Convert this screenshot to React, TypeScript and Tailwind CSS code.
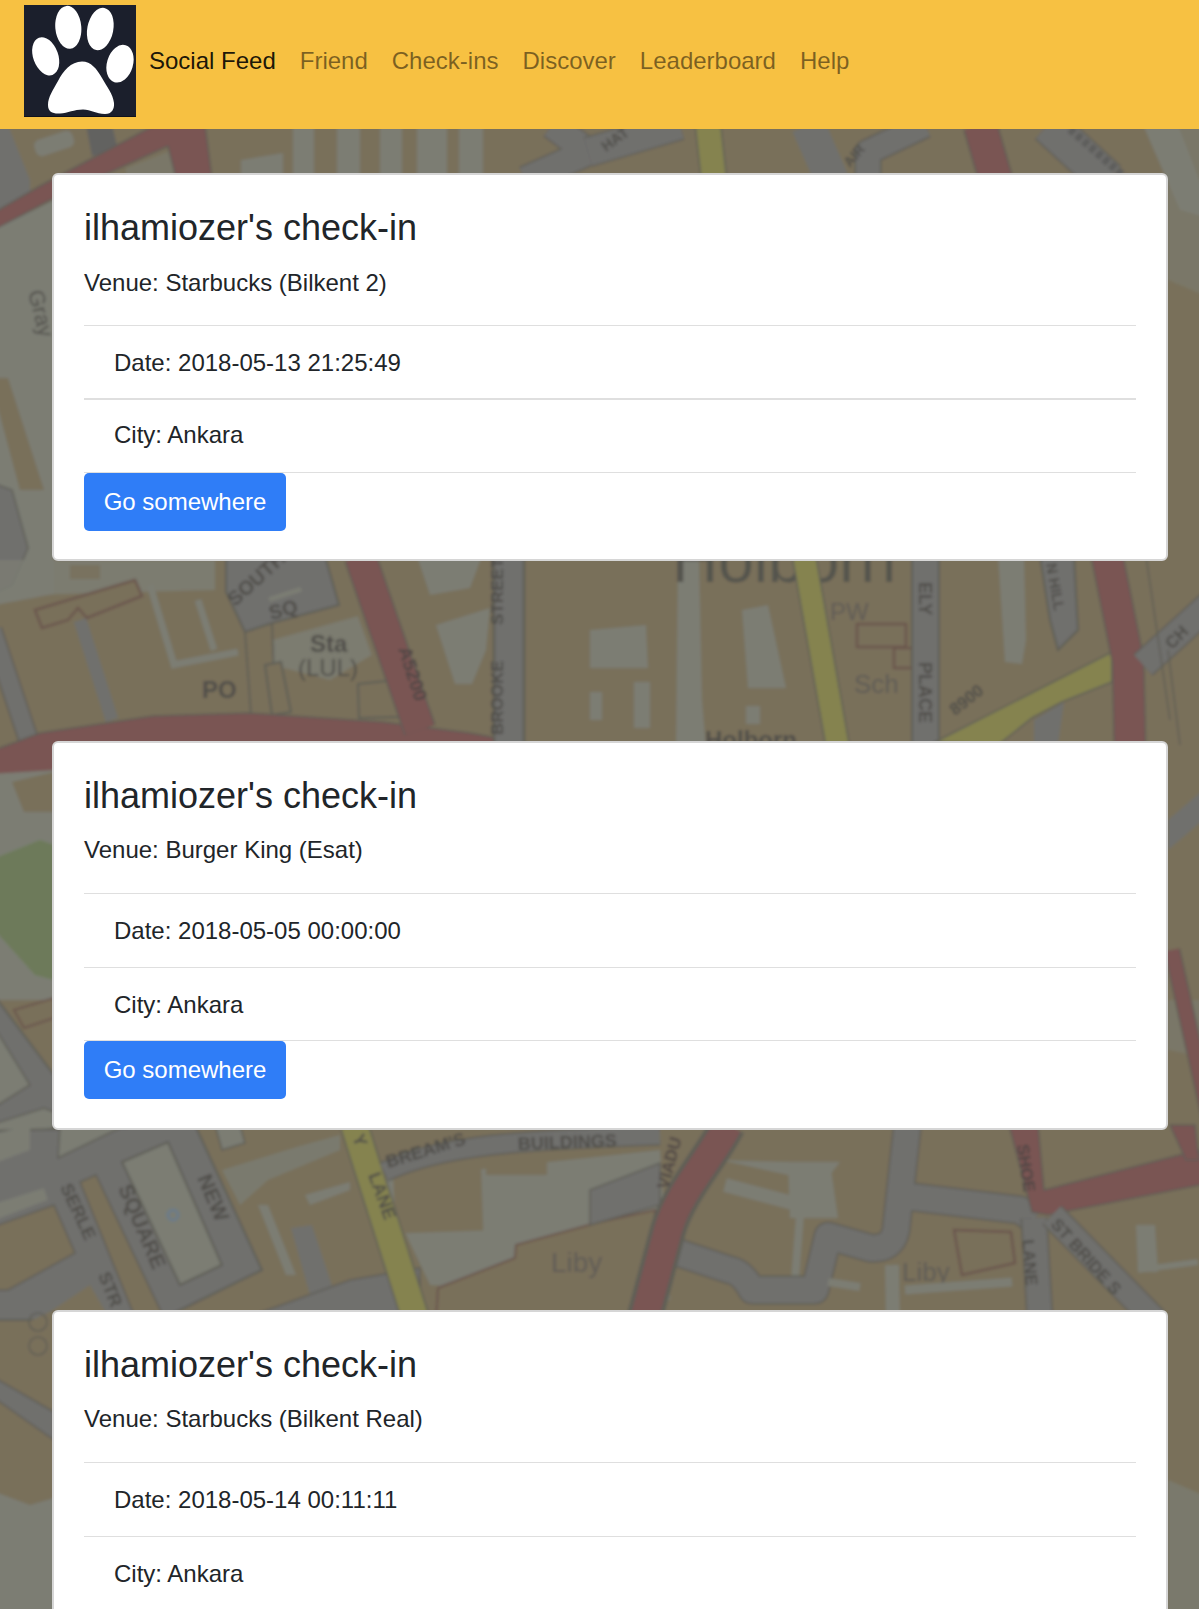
const TAN = "#79705a";
const PALE = "#7b7d73";
const GREY = "#706f6d";
const RED = "#7a5452";
const YEL = "#858350";
const LINE = "#5f5e57";
const BROWN = "#6b564e";
const INK = "#4f4e4a";

function Road({ d, w, c = GREY, edge = LINE }: { d: string; w: number; c?: string; edge?: string }) {
  return (
    <g fill="none" strokeLinejoin="round">
      <path d={d} stroke={edge} strokeWidth={w + 3} />
      <path d={d} stroke={c} strokeWidth={w} />
    </g>
  );
}

function Label({ x, y, r = 0, s = 14, b = true, t, c = INK }: { x: number; y: number; r?: number; s?: number; b?: boolean; t: string; c?: string }) {
  return (
    <text
      x={0}
      y={0}
      transform={`translate(${x} ${y}) rotate(${r})`}
      fontSize={s}
      fontWeight={b ? 700 : 400}
      fontFamily="'Liberation Sans', sans-serif"
      fill={c}
    >
      {t}
    </text>
  );
}

function MapBackground() {
  return (
    <svg className="absolute top-0 left-0 w-[1199px] h-[1609px]" viewBox="0 0 1199 1609" aria-hidden="true">
      <defs>
        <filter id="mapblur" x="-5%" y="-5%" width="110%" height="110%">
          <feGaussianBlur stdDeviation="1.7" />
        </filter>
      </defs>
      <g filter="url(#mapblur)">
        <rect x="-20" y="100" width="1240" height="1530" fill={TAN} />

        {/* top band */}
        <path d="M-10 125 L8 125 L30 180 L30 300 L-10 300 Z" fill={GREY} />
        <rect x="34" y="135" width="40" height="17" rx="6" fill={PALE} transform="rotate(-18 54 143)" />
        <path d="M86 125 L112 125 L118 150 L92 156 Z" fill="#626260" />
        <path d="M126 168 L172 150 L182 178 L126 178 Z" fill={PALE} opacity="0.5" />
        <path d="M-10 215 L40 186 L155 125 L205 125 L212 178 L176 178 L168 146 L60 195 L-10 232 Z" fill={RED} stroke={LINE} strokeWidth="1.5" />
        <path d="M241 160 L283 153 L283 178 L241 178 Z" fill={PALE} />
        <rect x="293" y="125" width="21" height="52" fill={PALE} />
        <rect x="337" y="125" width="23" height="52" fill={PALE} />
        <rect x="380" y="125" width="22" height="52" fill={PALE} />
        <rect x="417" y="125" width="30" height="52" fill={PALE} />
        <rect x="459" y="125" width="24" height="52" fill={PALE} />
        <Road d="M552 125 L588 152 L525 180" w={26} />
        <Road d="M680 125 L588 152" w={28} />
        <Label x={606} y={152} r={-36} s={15} t="HAT" />
        <Road d="M708 125 L714 180" w={24} c={YEL} />
        <Road d="M808 125 L832 180" w={34} c={GREY} edge={TAN} />
        <Road d="M925 125 L868 152 L868 180" w={24} />
        <Label x={850} y={168} r={-50} s={14} t="AIR" />
        <Road d="M980 125 L996 180" w={32} c={RED} />
        <Road d="M1048 125 L1108 180" w={36} />
        <path d="M1070 129 L1128 180" stroke="#5d5d5b" strokeWidth="8" fill="none" strokeDasharray="6 3" />
        <path d="M1143 125 L1178 125 L1215 220 L1180 210 Z" fill={PALE} />

        {/* left strip */}
        <path d="M-10 232 L54 200 L54 620 L-10 620 Z" fill={PALE} />
        <Label x={28} y={292} r={76} s={22} t="Gray" b={false} />
        <path d="M-10 378 L8 378 L44 490 L20 490 Z" fill={TAN} />
        <path d="M-10 482 L12 490 L28 548 L12 585 L-10 595 Z" fill={GREY} stroke={LINE} strokeWidth="1.5" />
        <path d="M-10 606 L54 594 L54 745 L-10 745 Z" fill={TAN} />

        {/* middle band */}
        <path d="M-10 560 L215 560 L215 590 L-10 596 Z" fill={PALE} opacity="0.85" />
        <rect x="70" y="565" width="30" height="14" fill={TAN} opacity="0.8" />
        <Road d="M-8 630 L28 738" w={18} />
        <Road d="M80 620 L112 720" w={13} c={GREY} edge={TAN} />
        <path d="M150 585 L175 668 M172 665 L238 652" stroke={PALE} strokeWidth="7" fill="none" />
        <path d="M198 600 L214 650" stroke={PALE} strokeWidth="7" fill="none" />
        <path d="M35 610 L135 580 L142 596 L87 618 L78 608 L68 620 L42 628 Z" fill={TAN} stroke={BROWN} strokeWidth="2.5" />
        <path d="M226 556 L325 556 L339 605 L272 623 L245 632 L226 592 Z" fill={GREY} stroke={LINE} strokeWidth="2" />
        <Label x={235} y={607} r={-42} s={20} t="SOUTH" />
        <Label x={271} y={620} r={-15} s={20} t="SQ" />
        <rect x="268" y="592" width="34" height="5" fill={PALE} transform="rotate(-18 285 594)" />
        <path d="M272 640 L358 616 L372 655 L330 680 L272 665 Z" fill={PALE} opacity="0.85" />
        <path d="M245 632 L251 715 M272 623 L274 680" stroke={LINE} strokeWidth="1.8" fill="none" />
        <Label x={310} y={652} s={24} t="Sta" />
        <Label x={298} y={676} s={24} t="(LUL)" b={false} />
        <Label x={202} y={698} s={24} t="PO" />
        <path d="M265 665 L281 662 L291 712 L272 715 Z" fill={TAN} stroke={LINE} strokeWidth="2" />
        <path d="M358 684 L395 680 L400 717 L359 718 Z" fill={TAN} stroke={LINE} strokeWidth="2" />
        <path d="M417 556 L482 556 L470 588 L430 595 Z" fill={PALE} />
        <path d="M436 625 L490 608 L486 650 L472 684 L455 684 Z" fill={PALE} />
        <path d="M-10 760 L0 748 L40 733 L153 716 L249 713 L383 722 L470 733 L540 746 L540 775 L-10 775 Z" fill={RED} stroke={LINE} strokeWidth="1.5" />
        <Road d="M360 556 L420 730" w={30} c={RED} />
        <Label x={398} y={649} r={72} s={19} t="A5200" c="#4f4645" />
        <rect x="494" y="556" width="30" height="190" fill={GREY} stroke={LINE} strokeWidth="2.5" />
        <Label x={503} y={735} r={-90} s={17} t="BROOKE" />
        <Label x={503} y={625} r={-90} s={17} t="STREET" />
        <path d="M590 630 L646 625 L648 668 L590 668 Z" fill={PALE} />
        <rect x="590" y="692" width="12" height="28" fill={PALE} />
        <rect x="634" y="682" width="16" height="46" fill={PALE} />
        <path d="M678 556 L699 556 L702 700 L706 748 L676 748 Z" fill={PALE} />
        <path d="M742 610 L768 605 L786 688 L748 688 Z" fill={PALE} />
        <rect x="746" y="706" width="14" height="18" fill={PALE} />
        <Label x={672} y={582} s={64} t="Holborn" b={false} c="#55544e" />
        <Road d="M804 556 L838 748" w={22} c={YEL} edge={LINE} />
        <Label x={830} y={620} s={24} t="PW" b={false} c="#605c57" />
        <rect x="857" y="624" width="49" height="23" fill="none" stroke={BROWN} strokeWidth="2.5" />
        <rect x="894" y="648" width="18" height="20" fill="none" stroke={BROWN} strokeWidth="2.5" />
        <Label x={854} y={693} s={26} t="Sch" b={false} c="#5e5b56" />
        <Label x={705} y={748} s={24} t="Holborn" />
        <rect x="912" y="556" width="27" height="190" fill={GREY} stroke={LINE} strokeWidth="2" />
        <Label x={919} y={582} r={90} s={18} t="ELY" />
        <Label x={919} y={662} r={90} s={18} t="PLACE" />
        <Label x={955} y={716} r={-38} s={17} t="8900" />
        <path d="M998 556 L1024 556 L1026 640 L1022 664 L1005 662 Z" fill={PALE} />
        <path d="M1040 556 L1074 556 L1078 630 L1058 650 L1050 620 Z" fill={GREY} stroke={LINE} strokeWidth="2" />
        <Label x={1046} y={564} r={80} s={15} t="N HILL" />
        <path d="M935 742 L1112 652 L1112 682 L1062 702 L1032 718 L998 745 Z" fill={YEL} stroke={LINE} strokeWidth="1.5" />
        <path d="M1034 720 L1064 702 L1058 745 L1034 745 Z" fill={GREY} />
        <Road d="M1107 556 L1128 660 L1130 748" w={30} c={RED} />
        <Road d="M1143 665 L1215 600" w={26} />
        <Label x={1172} y={650} r={-45} s={17} t="CH" />
        <path d="M1146 556 L1170 720 M1168 650 L1180 745" stroke={LINE} strokeWidth="1.5" fill="none" />

        {/* left strip, second card */}
        <path d="M-10 750 L54 742 L54 770 L-10 774 Z" fill={RED} />
        <path d="M-10 774 L54 770 L54 1000 L-10 1000 Z" fill={PALE} />
        <path d="M12 782 L54 772 L54 812 L24 812 Z" fill={TAN} />
        <path d="M-10 860 L40 840 L54 845 L54 980 L35 975 L-10 925 Z" fill="#6d7a5a" />
        <path d="M-10 990 L54 1075 L54 1180 L-10 1200 Z" fill={GREY} stroke={LINE} strokeWidth="2" />
        <path d="M14 1010 L54 998 L54 1018 L24 1028 Z" fill={TAN} stroke={BROWN} strokeWidth="2" />
        <path d="M-10 1020 L30 1085 L-10 1110 Z" fill={PALE} stroke={LINE} strokeWidth="1.5" />
        <path d="M-10 1125 L44 1108 L54 1112 L54 1128 L-10 1145 Z" fill={PALE} stroke={LINE} strokeWidth="1.5" />
        <path d="M-10 1150 L54 1132 L54 1180 L-10 1195 Z" fill={TAN} />

        {/* lower band, left */}
        <path d="M-10 1131 L195 1125 L262 1270 L160 1320 L-10 1320 Z" fill={GREY} stroke={LINE} strokeWidth="2" />
        <path d="M-10 1135 L30 1125 L30 1150 L-10 1165 Z" fill={PALE} />
        <path d="M60 1125 L126 1125 L58 1158 Z" fill={PALE} stroke={LINE} strokeWidth="1.5" />
        <path d="M215 1125 L240 1125 L245 1143 L222 1150 Z" fill={PALE} stroke={LINE} strokeWidth="1.5" />
        <path d="M122 1162 L168 1142 L222 1265 L180 1285 Z" fill={PALE} stroke={LINE} strokeWidth="2" />
        <circle cx="173" cy="1215" r="5" fill="none" stroke="#6b7a8a" strokeWidth="3" />
        <path d="M80 1182 L96 1175 L165 1320 L136 1320 Z" fill={TAN} stroke={LINE} strokeWidth="1.5" />
        <path d="M-10 1228 L54 1205 L75 1253 L8 1290 L-10 1290 Z" fill={TAN} stroke={LINE} strokeWidth="1.5" />
        <path d="M-10 1205 L44 1188 L48 1200 L-10 1222 Z" fill={PALE} />
        <path d="M38 1320 L90 1285 L110 1320 Z" fill={TAN} />
        <Label x={60} y={1187} r={65} s={18} t="SERLE" />
        <Label x={118} y={1188} r={67} s={21} t="SQUARE" />
        <Label x={197} y={1178} r={67} s={21} t="NEW" />
        <Label x={98} y={1275} r={68} s={18} t="STR" />

        <path d="M222 1170 L300 1146 L340 1135 L340 1150 L268 1180 L240 1205 Z" fill={PALE} opacity="0.8" />
        <path d="M305 1195 L350 1182 L350 1190 L310 1205 Z" fill={PALE} />
        <path d="M258 1205 L268 1205 L296 1275 L286 1275 Z" fill={PALE} />
        <path d="M291 1228 L312 1225 L334 1292 L310 1295 Z" fill={GREY} />
        <path d="M240 1320 L350 1280 L420 1268 L420 1320 Z" fill={GREY} stroke={LINE} strokeWidth="1.5" />

        <path d="M380 1180 L660 1150 L670 1300 L430 1285 Z" fill={PALE} />
        <rect x="394" y="1162" width="88" height="70" fill={TAN} transform="rotate(-2 438 1197)" />
        <rect x="486" y="1155" width="61" height="20" fill={TAN} />
        <Road d="M354 1125 L416 1320" w={26} c={YEL} />
        <Label x={352} y={1137} r={68} s={18} t="Y" />
        <Label x={368} y={1175} r={70} s={18} t="LANE" />
        <path d="M384 1172 C 440 1145 520 1140 660 1135" stroke={LINE} strokeWidth="21" fill="none" />
        <path d="M384 1172 C 440 1145 520 1140 660 1135" stroke={GREY} strokeWidth="18" fill="none" />
        <Label x={388} y={1168} r={-17} s={18} t="BREAM'S" />
        <Label x={518} y={1150} r={-2} s={18} t="BUILDINGS" />
        <path d="M436 1320 L438 1288 L515 1258 L516 1245 L600 1222 L655 1210 L650 1320 Z" fill={TAN} stroke={BROWN} strokeWidth="2" />
        <Label x={551} y={1272} s={28} t="Liby" b={false} c="#605c57" />
        <path d="M590 1225 L590 1190 L660 1163 L660 1205 Z" fill={GREY} stroke={LINE} strokeWidth="1.5" />

        {/* lower band, right */}
        <path d="M720 1160 L788 1175 L830 1175 L840 1162 L790 1162 Z" fill={PALE} />
        <path d="M788 1162 L830 1162 L838 1218 L790 1218 Z" fill={PALE} />
        <path d="M725 1185 L800 1205" stroke={PALE} strokeWidth="14" fill="none" />
        <path d="M800 1215 L795 1280" stroke={PALE} strokeWidth="8" fill="none" />
        <Road d="M908 1120 L896 1230 Q 892 1250 870 1248 L828 1236 L815 1290 L752 1290 Q 742 1272 730 1270 L670 1250 M896 1195 L1020 1210 L1034 1220" w={26} />
        <path d="M728 1125 C 710 1160 680 1190 668 1230 L644 1320" stroke={LINE} strokeWidth="36" fill="none" />
        <path d="M728 1125 C 710 1160 680 1190 668 1230 L644 1320" stroke={RED} strokeWidth="28" fill="none" />
        <Label x={668} y={1190} r={-75} s={17} t="VIADU" c="#4f4645" />
        <path d="M954 1230 L1011 1232 L1015 1263 L962 1275 Z" fill="none" stroke={BROWN} strokeWidth="2.5" />
        <Label x={902} y={1281} s={26} t="Liby" b={false} c="#5e5b56" />
        <path d="M905 1290 L1012 1282" stroke={PALE} strokeWidth="9" fill="none" />
        <path d="M892 1265 L893 1320" stroke={PALE} strokeWidth="14" fill="none" />
        <path d="M828 1282 L860 1287" stroke={PALE} strokeWidth="8" fill="none" />
        <path d="M1136 1225 L1155 1225 L1158 1272 L1138 1272 Z" fill={PALE} />
        <path d="M1138 1270 L1198 1262" stroke={PALE} strokeWidth="6" fill="none" />
        <path d="M1009 1125 L1038 1125 L1044 1190 L1199 1150 L1215 1182 L1048 1215 L1032 1212 Z" fill={RED} stroke={LINE} strokeWidth="1.5" />
        <Label x={1017} y={1145} r={82} s={17} t="SHOE" c="#4f4645" />
        <Road d="M1034 1218 L1040 1320" w={24} />
        <Label x={1022} y={1240} r={85} s={17} t="LANE" />
        <Road d="M1052 1215 L1155 1320" w={24} />
        <Label x={1050} y={1225} r={48} s={17} t="ST BRIDE S" />

        {/* right strip */}
        <path d="M1168 125 L1215 125 L1215 300 L1168 280 Z" fill={PALE} opacity="0.55" />
        <path d="M1170 1125 L1195 1125 L1199 1160 L1186 1160 Z" fill={RED} stroke={LINE} strokeWidth="1.5" />
        <path d="M1168 1000 L1215 1000 L1215 1060 L1168 1050 Z" fill={PALE} opacity="0.5" />
        <Road d="M1172 950 L1210 1120" w={14} c={RED} />
        <path d="M1168 820 L1215 780 L1215 810 L1168 850 Z" fill={GREY} />

        {/* lower left strip */}
        <path d="M-10 1340 L54 1310 L54 1609 L-10 1609 Z" fill={TAN} />
        <path d="M-10 1375 L54 1412 L54 1440 L-10 1395 Z" fill={GREY} stroke={LINE} strokeWidth="1.5" />
        <circle cx="38" cy="1322" r="9" fill="none" stroke={LINE} strokeWidth="1.5" />
        <circle cx="38" cy="1346" r="9" fill="none" stroke={LINE} strokeWidth="1.5" />
        <path d="M-10 1490 L30 1505 L54 1498 L54 1640 L-10 1640 Z" fill={PALE} />
        <path d="M1168 1320 L1215 1300 L1215 1640 L1168 1640 Z" fill={TAN} />
        <path d="M1168 1480 L1215 1500 L1215 1640 L1168 1640 Z" fill={PALE} opacity="0.7" />
      </g>
    </svg>
  );
}

function Paw() {
  return (
    <svg className="w-[112px] h-[112px] shrink-0" viewBox="0 0 112 112" role="img" aria-label="Paw logo">
      <rect width="112" height="112" fill="#1b1f2c" />
      <rect y="111" width="112" height="1" fill="#10121b" />
      <g fill="#ffffff">
        <ellipse cx="44.3" cy="22.3" rx="13" ry="21.5" transform="rotate(-5 44.3 22.3)" />
        <ellipse cx="76.3" cy="24" rx="13" ry="21.5" transform="rotate(11 76.3 24)" />
        <ellipse cx="21.7" cy="51.3" rx="12.5" ry="19.8" transform="rotate(-20 21.7 51.3)" />
        <ellipse cx="96" cy="58.7" rx="13" ry="19.3" transform="rotate(17 96 58.7)" />
        <path d="M58 56.5 C47 56.5 39 66 34 76 C29 85 24 92 24 100 C24 107 29 109 36 108.5 C44 108 50 104.5 59 104.5 C67 104.5 72 109 81 109 C88 109 90.5 104 90 98 C89 89 83 82 78 73 C73 64 67 56.5 58 56.5 Z" />
      </g>
    </svg>
  );
}

const links = ["Friend", "Check-ins", "Discover", "Leaderboard", "Help"];

const checkins = [
  { venue: "Starbucks (Bilkent 2)", date: "2018-05-13 21:25:49", thick: true, action: true },
  { venue: "Burger King (Esat)", date: "2018-05-05 00:00:00", thick: false, action: true },
  { venue: "Starbucks (Bilkent Real)", date: "2018-05-14 00:11:11", thick: false, action: false },
];

function Card({ venue, date, thick, action }: { venue: string; date: string; thick: boolean; action: boolean }) {
  return (
    <article className={thick ? "bg-white border-2 border-[#d6d6d6] rounded-[6px] px-[30px] pt-[31px] pb-[28px] text-[#212529] shrink-0" : "bg-white border-2 border-[#d6d6d6] rounded-[6px] px-[30px] pt-[31px] pb-[29px] text-[#212529] shrink-0"}>
      <h2 className={thick ? "text-[36px] leading-[43px] font-normal mb-[16px]" : "text-[36px] leading-[43px] font-normal mb-[15px]"}>ilhamiozer's check-in</h2>
      <p className={thick ? "text-[24px] leading-[36px] pb-[24px]" : "text-[24px] leading-[36px] pb-[25px]"}>Venue: {venue}</p>
      <ul className="text-[24px] leading-[36px]">
        <li className={thick ? "border-t border-[#dfdfdf] px-[30px] pt-[19px] pb-[17px]" : "border-t border-[#dfdfdf] px-[30px] pt-[19px] pb-[18px]"}>Date: {date}</li>
        <li className={thick ? "border-t-2 border-[#dfdfdf] px-[30px] pt-[17px] pb-[19px]" : "border-t border-[#dfdfdf] px-[30px] pt-[19px] pb-[17px]"}>City: Ankara</li>
      </ul>
      <div className="border-t border-[#dfdfdf]">
        {action && (
          <button className="block w-[202px] h-[58px] bg-[#2f7df7] text-white text-[24px] leading-[36px] rounded-[5px]">Go somewhere</button>
        )}
      </div>
    </article>
  );
}

export default function App() {
  return (
    <div className="relative h-screen overflow-hidden bg-[#79705a] font-['Liberation_Sans',sans-serif]">
      <MapBackground />
      <nav className="relative flex items-center h-[129px] bg-[#f7c142] pl-[24px] pb-[7px] text-[24px] leading-[36px]">
        <Paw />
        <div className="flex items-center gap-[24px] ml-[13px]">
          <a className="text-black/90">Social Feed</a>
          {links.map((l) => (
            <a key={l} className="text-black/50">{l}</a>
          ))}
        </div>
      </nav>
      <main className="relative flex flex-col gap-[180px] pl-[52px] pr-[31px] pt-[44px]">
        {checkins.map((c) => (
          <Card key={c.date} {...c} />
        ))}
      </main>
    </div>
  );
}
